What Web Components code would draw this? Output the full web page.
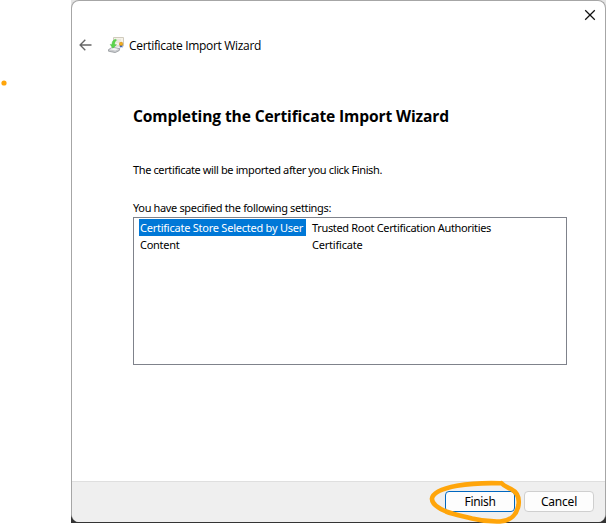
<!DOCTYPE html>
<html lang="en">
<head>
<meta charset="utf-8">
<title>Certificate Import Wizard</title>
<style>
html,body{margin:0;width:606px;height:526px;overflow:hidden;background:#fff}
body{font-family:"Noto Sans","Open Sans",sans-serif;color:#000;position:relative}
ink-mark{position:absolute;left:0;top:0;z-index:2;pointer-events:none}
wizard-window{margin-left:71px}
</style>
</head>
<body>
<wizard-window>
  <title-bar slot="title"><fit-text size="12" width="132" line="16">Certificate Import Wizard</fit-text></title-bar>
  <fit-text slot="body" size="15.6" weight="700" width="316" line="22">Completing the Certificate Import Wizard</fit-text>
  <fit-text slot="body" size="11" width="249" line="16" style="margin-top:35px">The certificate will be imported after you click Finish.</fit-text>
  <fit-text slot="body" size="11" width="198" line="16" style="margin-top:22px">You have specified the following settings:</fit-text>
  <settings-list slot="body">
    <setting-row selected>
      <fit-text slot="name" size="11" width="163" line="17">Certificate Store Selected by User</fit-text>
      <fit-text size="11" width="179" line="17">Trusted Root Certification Authorities</fit-text>
    </setting-row>
    <setting-row>
      <fit-text slot="name" size="11" width="39.5" line="17">Content</fit-text>
      <fit-text size="11" width="50.5" line="17">Certificate</fit-text>
    </setting-row>
  </settings-list>
  <push-button slot="actions" primary><fit-text size="12" width="31" line="18">Finish</fit-text></push-button>
  <push-button slot="actions"><fit-text size="12" width="36" line="18">Cancel</fit-text></push-button>
</wizard-window>
<ink-mark></ink-mark>
<script>
const define = (name, html, connected) => customElements.define(name, class extends HTMLElement {
  constructor(){ super(); this.attachShadow({mode:'open'}).innerHTML = html; }
  connectedCallback(){ if (connected) connected.call(this); }
});

define('wizard-window', `<style>
:host{display:block;width:535px;height:523px;background:linear-gradient(#e4e4e4 0 40px,#343434 490px)}
.frame{box-sizing:border-box;width:535px;height:522px;border:1px solid #a6a6a6;border-bottom:0;border-radius:8px;background:#fff;display:flex;flex-direction:column;overflow:hidden}
.body{flex:1;display:flex;flex-direction:column;align-items:flex-start;padding:44px 0 0 61px}
footer{box-sizing:border-box;height:41px;background:#efefef;border-top:1px solid #dfdfdf;display:flex;justify-content:flex-end;gap:9px;padding:9px 11px 0 0}
</style><div class="frame"><slot name="title"></slot><div class="body"><slot name="body"></slot></div><footer><slot name="actions"></slot></footer></div>`);

define('title-bar', `<style>
:host{display:block;height:60px}
.close{display:flex;justify-content:flex-end;height:30px;padding-right:9px;box-sizing:border-box}
.close svg{margin-top:8px}
.row{display:flex;align-items:center;height:28px;padding-left:7px}
.icon{margin:0 5px 0 16px}
.label{padding-top:2px;font-family:"Open Sans","Noto Sans",sans-serif}
</style><div class="close"><svg width="12" height="12" viewBox="0 0 12 12"><path d="M1.2 1.2l9.6 9.6M10.8 1.2l-9.6 9.6" stroke="#111" stroke-width="1.25"/></svg></div>
<div class="row"><svg width="13" height="12" viewBox="0 0 13 12" fill="none" stroke="#666" stroke-width="1.35"><path d="M12.5 6H1.2M6.3 .8L1.1 6l5.2 5.2"/></svg>
<svg class="icon" width="16" height="16" viewBox="0 0 16 16">
<path d="M5.5.5h10v8.5h-10z" fill="#f6f3e9" stroke="#d0cbbd"/><path d="M8 3h5M8 5h4" stroke="#dedbd0"/>
<path d="M.5 12.6l4-2.4 7.3 1.4-.6 2-4 2-6.7-1.4z" fill="#c9cbce" stroke="#888d91" stroke-width=".7"/><path d="M1.6 12.3l3.3-1.5 5.6 1.1-3.2 1.5z" fill="#f2f3f4"/>
<path d="M7.6 2.2C5 2.8 4 4.8 4 7.4H2.2l2.6 3.8 3.7-3.5-1.9-.2C6.6 5.4 7.2 4 8.6 3.2z" fill="#5bd54b" stroke="#3dba3b" stroke-width=".4"/>
<path d="M11.8 7.2h2.6v3.6l-1.3-.9-1.3.9z" fill="#4268b8"/><circle cx="13.1" cy="6.9" r="1.8" fill="#f2ad1d" stroke="#b87910" stroke-width=".4"/></svg>
<div class="label"><slot></slot></div></div>`);

define('settings-list', `<style>
:host{box-sizing:border-box;display:block;width:434px;height:148px;margin-top:1px;border:1px solid #7f828b;padding:1px 5px;background:#fff}
</style><slot></slot>`);

define('setting-row', `<style>
:host{display:grid;grid-template-columns:167px 1fr;column-gap:6px;height:17px}
.name{padding-left:1px}
:host([selected]) .name{background:#0078d7;color:#fff}
</style><div class="name"><slot name="name"></slot></div><slot></slot>`);

define('push-button', `<style>
:host{box-sizing:border-box;display:flex;align-items:center;justify-content:center;width:70px;height:21px;border:1px solid #cfcfcf;border-radius:4px;background:#fdfdfd}
:host([primary]){border-color:#0067c0}
</style><slot></slot>`);

/* A single line of text whose letter-spacing is tuned to reach a given width. */
define('fit-text', `<style>:host{display:block;white-space:nowrap}:host([weight]){font-family:"Open Sans","Noto Sans",sans-serif}span{display:inline-block;vertical-align:top}</style><span><slot></slot></span>`, function(){
  const a = k => this.getAttribute(k);
  const s = this.style, span = this.shadowRoot.querySelector('span');
  s.fontSize = a('size') + 'px';
  s.fontWeight = a('weight') || 400;
  s.lineHeight = (a('line') || 18) + 'px';
  const n = this.textContent.length;
  const gap = (a('width') - span.getBoundingClientRect().width) / n;
  s.letterSpacing = gap.toFixed(3) + 'px';
});

define('ink-mark', `<style>:host{display:block}svg{display:block}</style><svg width="606" height="526" viewBox="0 0 606 526" fill="none" stroke="#ffa50a" stroke-linecap="round" stroke-linejoin="round">
<circle cx="4" cy="83" r="2.6" fill="#ffa50a" stroke="none"/>
<path stroke-width="4.6" d="M501.5 483.3C487 482.8 470 483.5 457 485.8C443 488.5 433 492 432 498.5C431.5 504 439 508.5 446 511.5C455 515 463 516 472 518.5C480 520.5 490 521.8 500 521.5C511 521 517 514 518.5 505C519.5 498 517 492 511 489C507 487 504 486 501.5 483.3"/></svg>`);
</script>
</body>
</html>
